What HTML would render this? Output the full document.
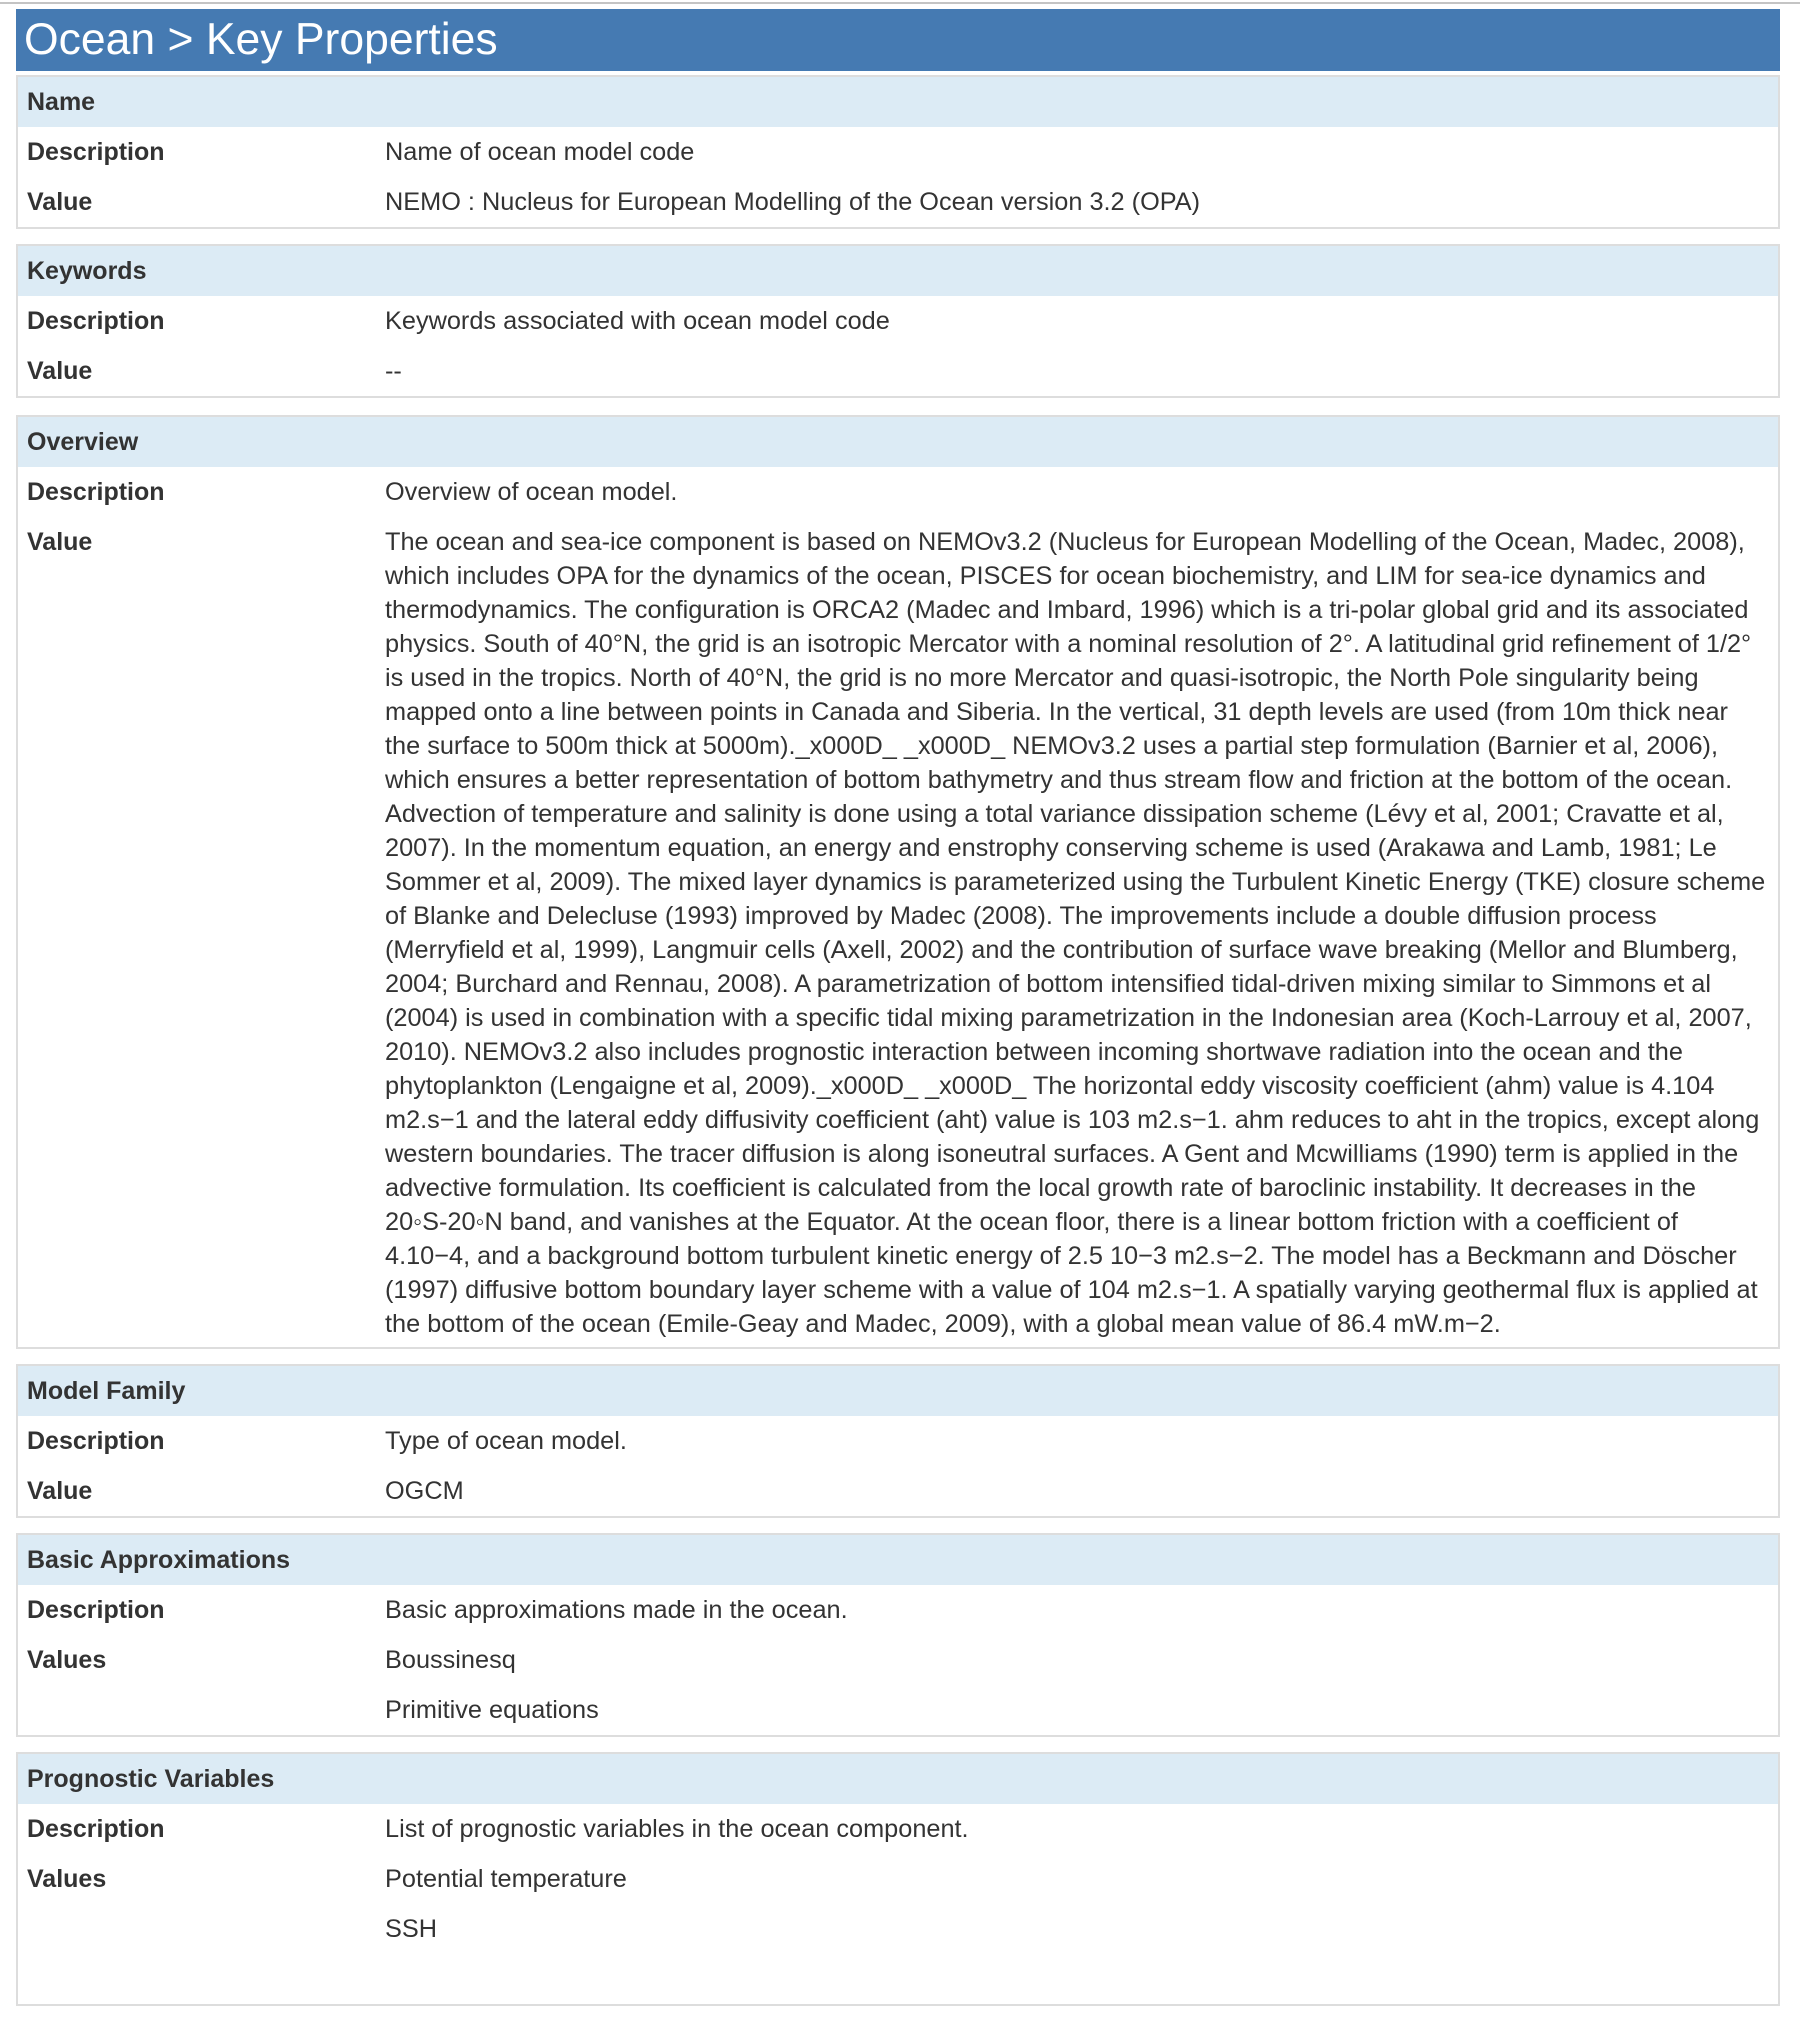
<!DOCTYPE html>
<html><head><meta charset="utf-8"><style>
*{margin:0;padding:0;box-sizing:border-box}
body{width:1800px;height:1952px;overflow:hidden;background:#fff;font-family:"Liberation Sans",Arial,sans-serif;color:#333;position:relative}
.topline{position:absolute;left:0;top:2px;width:1800px;height:2px;background:#c4c4c4}
.title{position:absolute;left:16px;top:9px;width:1764px;height:62px;background:#457ab2;color:#fff;font-size:44.5px;line-height:62px;padding-left:8px;white-space:nowrap}
.wrap{position:absolute;left:16px;top:75px;width:1764px}
.panel{border:2px solid #dddddd;margin-bottom:15px}
.ph{background:#dcebf5;height:50px;line-height:50px;font-weight:bold;font-size:25px;padding-left:9px}
.row{display:flex;min-height:50px;font-size:25px;line-height:50px}
.k{width:367px;padding-left:9px;font-weight:bold;flex:none}
.v{flex:1;white-space:nowrap;font-size:25.3px}
.para{line-height:34px;padding-top:8px;padding-bottom:6px}
.para .k{line-height:34px}
</style></head><body>
<div class="topline"></div>
<div class="title">Ocean &gt; Key Properties</div>
<div class="wrap">
<div class="panel"><div class="ph">Name</div>
<div class="row"><div class="k">Description</div><div class="v">Name of ocean model code</div></div>
<div class="row"><div class="k">Value</div><div class="v">NEMO : Nucleus for European Modelling of the Ocean version 3.2 (OPA)</div></div></div>

<div class="panel"><div class="ph">Keywords</div>
<div class="row"><div class="k">Description</div><div class="v">Keywords associated with ocean model code</div></div>
<div class="row"><div class="k">Value</div><div class="v">--</div></div></div>

<div class="panel" style="margin-top:17px"><div class="ph">Overview</div>
<div class="row"><div class="k">Description</div><div class="v">Overview of ocean model.</div></div>
<div class="row para"><div class="k">Value</div><div class="v">The ocean and sea-ice component is based on NEMOv3.2 (Nucleus for European Modelling of the Ocean, Madec, 2008),<br>which includes OPA for the dynamics of the ocean, PISCES for ocean biochemistry, and LIM for sea-ice dynamics and<br>thermodynamics. The configuration is ORCA2 (Madec and Imbard, 1996) which is a tri-polar global grid and its associated<br>physics. South of 40°N, the grid is an isotropic Mercator with a nominal resolution of 2°. A latitudinal grid refinement of 1/2°<br>is used in the tropics. North of 40°N, the grid is no more Mercator and quasi-isotropic, the North Pole singularity being<br>mapped onto a line between points in Canada and Siberia. In the vertical, 31 depth levels are used (from 10m thick near<br>the surface to 500m thick at 5000m)._x000D_ _x000D_ NEMOv3.2 uses a partial step formulation (Barnier et al, 2006),<br>which ensures a better representation of bottom bathymetry and thus stream flow and friction at the bottom of the ocean.<br>Advection of temperature and salinity is done using a total variance dissipation scheme (Lévy et al, 2001; Cravatte et al,<br>2007). In the momentum equation, an energy and enstrophy conserving scheme is used (Arakawa and Lamb, 1981; Le<br>Sommer et al, 2009). The mixed layer dynamics is parameterized using the Turbulent Kinetic Energy (TKE) closure scheme<br>of Blanke and Delecluse (1993) improved by Madec (2008). The improvements include a double diffusion process<br>(Merryfield et al, 1999), Langmuir cells (Axell, 2002) and the contribution of surface wave breaking (Mellor and Blumberg,<br>2004; Burchard and Rennau, 2008). A parametrization of bottom intensified tidal-driven mixing similar to Simmons et al<br>(2004) is used in combination with a specific tidal mixing parametrization in the Indonesian area (Koch-Larrouy et al, 2007,<br>2010). NEMOv3.2 also includes prognostic interaction between incoming shortwave radiation into the ocean and the<br>phytoplankton (Lengaigne et al, 2009)._x000D_ _x000D_ The horizontal eddy viscosity coefficient (ahm) value is 4.104<br>m2.s−1 and the lateral eddy diffusivity coefficient (aht) value is 103 m2.s−1. ahm reduces to aht in the tropics, except along<br>western boundaries. The tracer diffusion is along isoneutral surfaces. A Gent and Mcwilliams (1990) term is applied in the<br>advective formulation. Its coefficient is calculated from the local growth rate of baroclinic instability. It decreases in the<br>20◦S-20◦N band, and vanishes at the Equator. At the ocean floor, there is a linear bottom friction with a coefficient of<br>4.10−4, and a background bottom turbulent kinetic energy of 2.5 10−3 m2.s−2. The model has a Beckmann and Döscher<br>(1997) diffusive bottom boundary layer scheme with a value of 104 m2.s−1. A spatially varying geothermal flux is applied at<br>the bottom of the ocean (Emile-Geay and Madec, 2009), with a global mean value of 86.4 mW.m−2.</div></div></div>

<div class="panel"><div class="ph">Model Family</div>
<div class="row"><div class="k">Description</div><div class="v">Type of ocean model.</div></div>
<div class="row"><div class="k">Value</div><div class="v">OGCM</div></div></div>

<div class="panel"><div class="ph">Basic Approximations</div>
<div class="row"><div class="k">Description</div><div class="v">Basic approximations made in the ocean.</div></div>
<div class="row"><div class="k">Values</div><div class="v">Boussinesq</div></div>
<div class="row"><div class="k"></div><div class="v">Primitive equations</div></div></div>

<div class="panel"><div class="ph">Prognostic Variables</div>
<div class="row"><div class="k">Description</div><div class="v">List of prognostic variables in the ocean component.</div></div>
<div class="row"><div class="k">Values</div><div class="v">Potential temperature</div></div>
<div class="row"><div class="k"></div><div class="v">SSH</div></div>
<div class="row"><div class="k"></div><div class="v"></div></div></div>
</div>
</body></html>
